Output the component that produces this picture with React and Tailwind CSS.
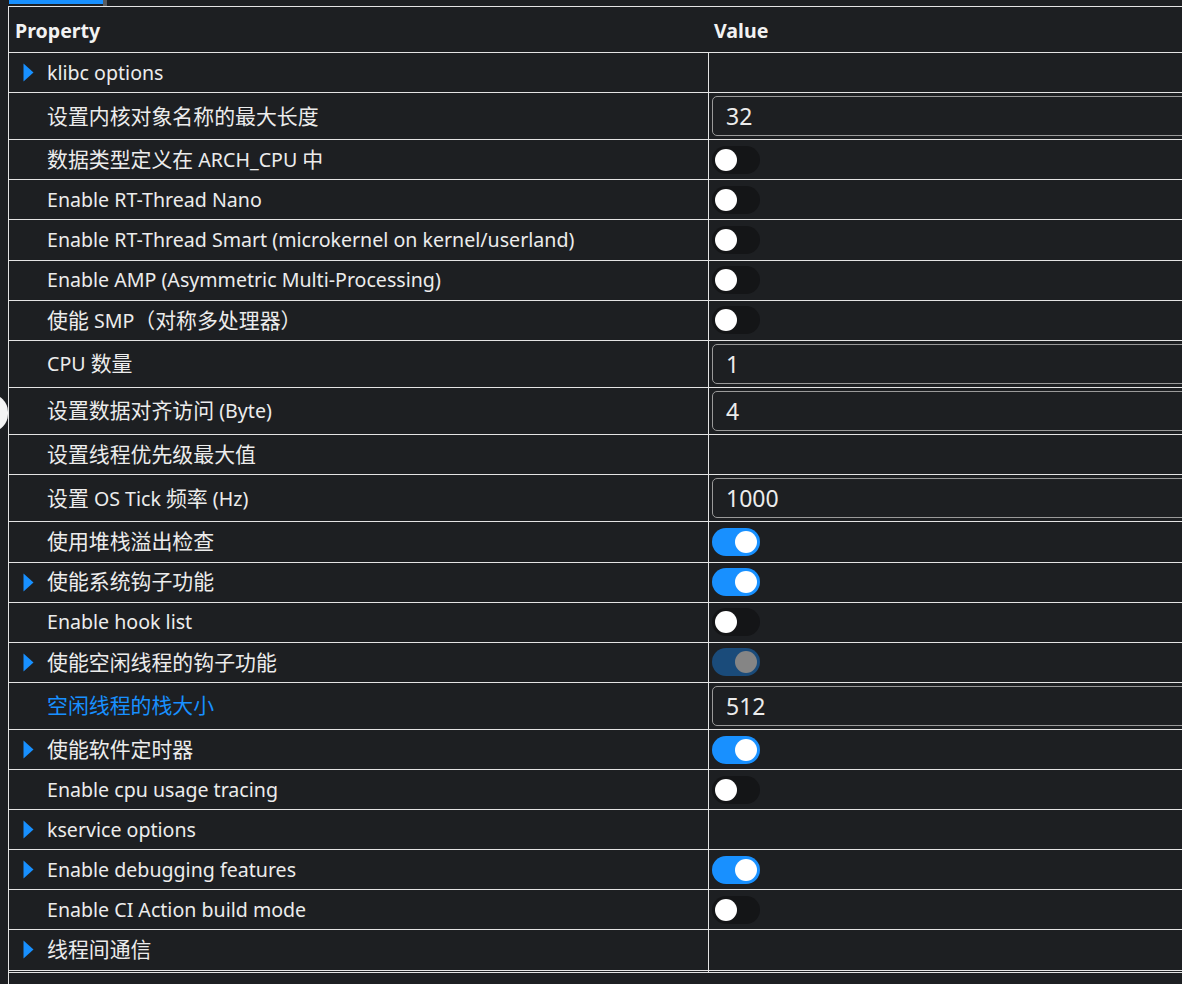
import React from 'react';

const rows = [
  { label: 'klibc options', arrow: true, type: 'none' },
  { label: '设置内核对象名称的最大长度', type: 'input', value: '32' },
  { label: '数据类型定义在 ARCH_CPU 中', type: 'off' },
  { label: 'Enable RT-Thread Nano', type: 'off' },
  { label: 'Enable RT-Thread Smart (microkernel on kernel/userland)', type: 'off' },
  { label: 'Enable AMP (Asymmetric Multi-Processing)', type: 'off' },
  { label: '使能 SMP（对称多处理器）', type: 'off' },
  { label: 'CPU 数量', type: 'input', value: '1' },
  { label: '设置数据对齐访问 (Byte)', type: 'input', value: '4' },
  { label: '设置线程优先级最大值', type: 'none' },
  { label: '设置 OS Tick 频率 (Hz)', type: 'input', value: '1000' },
  { label: '使用堆栈溢出检查', type: 'on' },
  { label: '使能系统钩子功能', arrow: true, type: 'on' },
  { label: 'Enable hook list', type: 'off' },
  { label: '使能空闲线程的钩子功能', arrow: true, type: 'disabled' },
  { label: '空闲线程的栈大小', type: 'input', value: '512', blue: true },
  { label: '使能软件定时器', arrow: true, type: 'on' },
  { label: 'Enable cpu usage tracing', type: 'off' },
  { label: 'kservice options', arrow: true, type: 'none' },
  { label: 'Enable debugging features', arrow: true, type: 'on' },
  { label: 'Enable CI Action build mode', type: 'off' },
  { label: '线程间通信', arrow: true, type: 'none' },
];

// CJK runs are rendered a bit larger, latin runs at the base size
function Label({ text }) {
  const parts = text.split(/([\u3000-\u9fff\uff00-\uffef]+)/);
  return parts.map((p, i) =>
    /[\u3000-\u9fff\uff00-\uffef]/.test(p) ? (
      <span key={i} className="text-[20.9px]">{p}</span>
    ) : (
      <span key={i}>{p}</span>
    )
  );
}

function Toggle({ state }) {
  if (state === 'on') {
    return (
      <div className="w-[48px] h-[28px] rounded-full bg-[#1890ff] flex items-center justify-end px-[3px]">
        <div className="w-[22px] h-[22px] rounded-full bg-white" />
      </div>
    );
  }
  if (state === 'disabled') {
    return (
      <div className="w-[48px] h-[28px] rounded-full bg-[#1a4b7a] flex items-center justify-end px-[3px]">
        <div className="w-[22px] h-[22px] rounded-full bg-[#858585]" />
      </div>
    );
  }
  return (
    <div className="w-[48px] h-[28px] rounded-full bg-[#141517] flex items-center px-[3px]">
      <div className="w-[22px] h-[22px] rounded-full bg-white" />
    </div>
  );
}

function Arrow() {
  return (
    <svg width="11" height="19" viewBox="0 0 11 19" className="shrink-0">
      <path d="M0.5 0.5 L10.5 9.5 L0.5 18.5 Z" fill="#1890ff" />
    </svg>
  );
}

function Row({ row }) {
  const isInput = row.type === 'input';
  return (
    <div className={`flex border-b border-[#e4e4e4] ${isInput ? 'h-[47.2px]' : 'h-[40.1px]'}`}>
      <div className="w-[699px] shrink-0 flex items-center">
        <div className="w-[38px] flex pl-[14px]">{row.arrow && <Arrow />}</div>
        <span className={`whitespace-nowrap ${row.blue ? 'text-[#1890ff]' : 'text-[#ececec]'}`}>
          <Label text={row.label} />
        </span>
      </div>
      <div className="flex-1 border-l border-[#e4e4e4] flex items-center pl-[3px]">
        {isInput && (
          <div className="w-full h-[40px] border border-[#9a9a9a] rounded-[5px] flex items-center pl-[13px] text-[23px] text-[#ececec]">
            {row.value}
          </div>
        )}
        {(row.type === 'on' || row.type === 'off' || row.type === 'disabled') && <Toggle state={row.type} />}
      </div>
    </div>
  );
}

export default function App() {
  return (
    <div
      className="relative w-[1182px] h-[984px] overflow-hidden bg-[#1d1f22] text-[19.6px]"
      style={{ fontFamily: '"Noto Sans", "Noto Sans CJK SC", sans-serif' }}
    >
      <div className="flex h-[6px]">
        <div className="w-[9px]" />
        <div className="w-[94px] h-[4px] bg-[#1890ff]" />
        <div className="w-[4px] h-[6px] bg-[#5a5c5f]" />
      </div>
      <div className="ml-[8px] border-l border-t border-[#e4e4e4] w-[1500px] h-[978px]">
        <div className="w-[1400px]">
          <div className="flex h-[46px] border-b border-[#e4e4e4] font-bold text-[#f2f2f2]">
            <div className="w-[699px] shrink-0 flex items-center pl-[6px] pt-[2px]">Property</div>
            <div className="flex-1 flex items-center pl-[6px] pt-[2px]">Value</div>
          </div>
          {rows.map((r, i) => (
            <Row key={i} row={r} />
          ))}
          <div className="flex h-[2px] border-b border-[#e4e4e4]">
            <div className="w-[699px]" />
            <div className="border-l border-[#e4e4e4]" />
          </div>
        </div>
      </div>
      <div className="absolute left-[-28px] top-[394px] w-[36px] h-[38px] rounded-full bg-[#f4f4f4]" />
    </div>
  );
}
